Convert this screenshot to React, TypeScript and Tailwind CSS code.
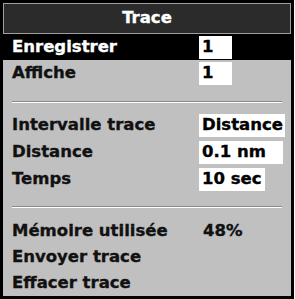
import React from 'react';

const font = { fontFamily: '"DejaVu Sans", Verdana, sans-serif' };

function Row({ label, value, boxW, selected, h = 'h-[27px]' }: { label: string; value?: string; boxW?: string; selected?: boolean; h?: string }) {
  return (
    <div className={`flex items-center ${h} pl-[9px] ${selected ? 'bg-black text-white' : 'text-[#111]'}`}>
      <div className="w-[187px] shrink-0 leading-none">{label}</div>
      {value !== undefined && boxW ? (
        <div className={`${boxW} h-[23px] bg-white text-black flex items-center pl-[3px] leading-none`}>{value}</div>
      ) : (
        value !== undefined && <div className="pl-[4px] leading-none">{value}</div>
      )}
    </div>
  );
}

export default function App() {
  return (
    <div className="w-[295px] h-[299px] bg-white">
      <div
        className="w-[294px] h-[299px] border-[3px] border-black bg-[#c0c0c0] flex flex-col overflow-hidden text-[16.5px] font-bold [-webkit-text-stroke:0.35px_currentcolor]"
        style={font}
      >
        {/* Title bar */}
        <div className="h-[31px] shrink-0 bg-[#2b2b2b] border border-[#a0a0a0] flex items-center justify-center text-white">
          Trace
        </div>

        <Row label="Enregistrer" value="1" boxW="w-[33px]" selected h="h-[26px]" />
        <Row label="Affiche" value="1" boxW="w-[33px]" h="h-[26px]" />

        <div className="mt-[15px] mx-[9px] h-[2px] border-t border-[#8a8a8a] border-b border-b-white" />

        <div className="mt-[9px]">
          <Row label="Intervalle trace" value="Distance" boxW="w-[86px]" />
          <Row label="Distance" value="0.1 nm" boxW="w-[84px]" />
          <Row label="Temps" value="10 sec" boxW="w-[66px]" />
        </div>

        <div className="mt-[13px] mx-[9px] h-[2px] border-t border-[#8a8a8a] border-b border-b-white" />

        <div className="mt-[10px]">
          <Row label="Mémoire utilisée" value="48%" h="h-[26px]" />
          <Row label="Envoyer trace" h="h-[26px]" />
          <Row label="Effacer trace" h="h-[26px]" />
        </div>
      </div>
    </div>
  );
}
